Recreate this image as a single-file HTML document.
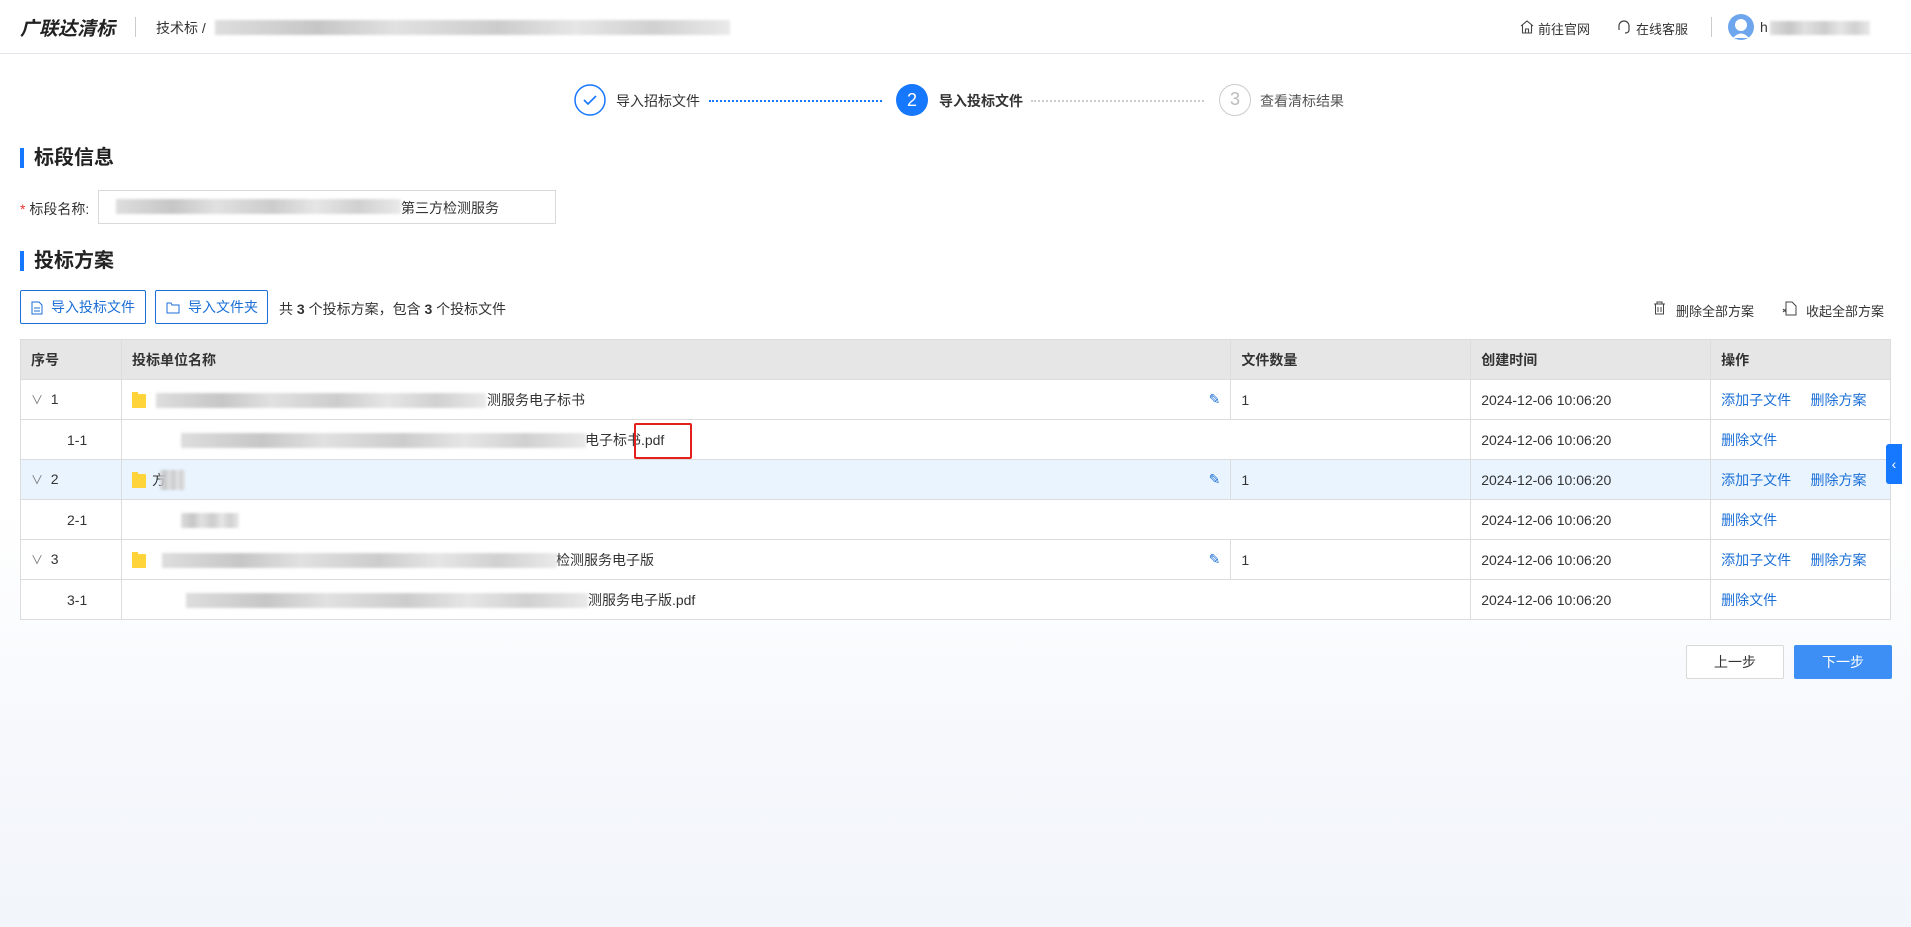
<!DOCTYPE html>
<html><head><meta charset="utf-8"><style>
*{margin:0;padding:0;box-sizing:border-box}
body{width:1911px;height:927px;overflow:hidden;font-family:"Liberation Sans","Noto Sans CJK SC",sans-serif;font-size:14px;color:#333;background:linear-gradient(180deg,#fff 0%,#fff 55%,#f6f8fc 80%,#f2f5fa 100%);position:relative}
.abs{position:absolute}
.hdr{left:0;top:0;width:1911px;height:54px;background:#fff;border-bottom:1px solid #e3e6eb}
.blur{position:absolute;background:linear-gradient(90deg,#d8d8d8,#bdbdbd 20%,#dcdcdc 35%,#c4c4c4 55%,#e2e2e2 70%,#c9c9c9 85%,#e6e6e6);filter:blur(1.2px);opacity:.85}
.sec{font-size:20px;font-weight:bold;color:#222;padding-left:10px;border-left:4px solid #1677ff;line-height:20px}
.btn{position:absolute;border:1px solid #1b6fd6;color:#1b6fd6;background:#fff;height:34px;line-height:32px;font-size:14px;border-radius:2px;padding-left:30px}
table{position:absolute;left:20px;top:339px;width:1871px;border-collapse:collapse;font-size:14px}
td,th{border:1px solid #dcdcdc;height:40px;padding:0 0 0 10px;text-align:left}
th{background:#e6e6e6;font-weight:bold;color:#333}
td{background:#fff}
.link{color:#1b6fd6}
.hl td{background:#e9f4ff}
.fold{display:inline-block;width:14px;height:14px;background:#ffd43b;border-radius:1px;vertical-align:middle;margin-right:6px;position:relative}
.fold:before{content:"";position:absolute;left:0;top:-2px;width:6px;height:3px;background:#ffd43b}
</style></head><body>
<div class="abs hdr"></div>
<div class="abs" style="left:20px;top:14px;font-size:19px;font-weight:bold;font-style:italic;color:#222">广联达清标</div>
<div class="abs" style="left:135px;top:17px;width:1px;height:20px;background:#ccc"></div>
<div class="abs" style="left:156px;top:18px;font-size:14px;color:#333">技术标 / </div>
<div class="blur" style="left:215px;top:20px;width:515px;height:15px"></div>
<svg class="abs" style="left:1519px;top:19px" width="16" height="16" viewBox="0 0 16 16" fill="none" stroke="#444" stroke-width="1.1"><path d="M2 7L8 2l6 5M3.5 6v8h9V6M6.5 14v-4h3v4"/></svg>
<div class="abs" style="left:1538px;top:19px;font-size:13px">前往官网</div>
<svg class="abs" style="left:1616px;top:19px" width="16" height="16" viewBox="0 0 16 16" fill="none" stroke="#444" stroke-width="1.2"><path d="M3 10V7a5 5 0 0 1 10 0v3M3 8v3M13 8v3M13 11q0 3-4 3"/></svg>
<div class="abs" style="left:1636px;top:19px;font-size:13px">在线客服</div>
<div class="abs" style="left:1711px;top:17px;width:1px;height:20px;background:#ccc"></div>
<svg class="abs" style="left:1727px;top:13px" width="28" height="28" viewBox="0 0 28 28"><circle cx="14" cy="14" r="13" fill="#6ea6ee"/><circle cx="14" cy="12" r="6" fill="#fff"/><path d="M6 25q8-9 16 0" fill="#fff"/></svg>
<div class="abs" style="left:1760px;top:19px;font-size:14px">h</div>
<div class="blur" style="left:1770px;top:21px;width:100px;height:14px"></div>

<svg class="abs" style="left:574px;top:84px" width="32" height="32"><circle cx="16" cy="16" r="15" fill="#fff" stroke="#1677ff" stroke-width="1.5"/><path d="M10 16l4 4 8-8" fill="none" stroke="#1677ff" stroke-width="1.6"/></svg>
<div class="abs" style="left:616px;top:91px;font-size:14px">导入招标文件</div>
<div class="abs" style="left:709px;top:100px;width:173px;border-top:2px dotted #1677ff"></div>
<div class="abs" style="left:896px;top:84px;width:32px;height:32px;border-radius:50%;background:#1677ff;color:#fff;font-size:18px;text-align:center;line-height:32px">2</div>
<div class="abs" style="left:939px;top:91px;font-size:14px;font-weight:bold">导入投标文件</div>
<div class="abs" style="left:1031px;top:100px;width:173px;border-top:2px dotted #ccc"></div>
<div class="abs" style="left:1219px;top:84px;width:32px;height:32px;border-radius:50%;border:1.5px solid #ccc;color:#bbb;font-size:18px;text-align:center;line-height:29px">3</div>
<div class="abs" style="left:1260px;top:91px;font-size:14px;color:#555">查看清标结果</div>

<div class="abs sec" style="left:20px;top:148px">标段信息</div>
<div class="abs" style="left:20px;top:199px;font-size:14px"><span style="color:#e33">*</span> 标段名称:</div>
<div class="abs" style="left:98px;top:190px;width:458px;height:34px;border:1px solid #d9d9d9;background:#fff"></div>
<div class="blur" style="left:116px;top:199px;width:285px;height:15px"></div>
<div class="abs" style="left:401px;top:198px;font-size:14px">第三方检测服务</div>

<div class="abs sec" style="left:20px;top:251px">投标方案</div>
<div class="btn" style="left:20px;top:290px;width:126px">导入投标文件</div>
<svg class="abs" style="left:31px;top:301px" width="12" height="14" fill="none" stroke="#1b6fd6"><path d="M1 1h7l3 3v9H1z M3 7h6M3 10h6"/></svg>
<div class="btn" style="left:155px;top:290px;width:113px;padding-left:32px">导入文件夹</div>
<svg class="abs" style="left:166px;top:302px" width="14" height="12" fill="none" stroke="#1b6fd6"><path d="M1 1h4l1 2h7v8H1z"/></svg>
<div class="abs" style="left:279px;top:299px;font-size:14px">共 <b>3</b> 个投标方案，包含 <b>3</b> 个投标文件</div>
<svg class="abs" style="left:1653px;top:301px" width="13" height="14" fill="none" stroke="#444"><path d="M1 3h11M4 3V1h5v2M2.5 3v10h8V3M5 6v5M8 6v5"/></svg>
<div class="abs" style="left:1676px;top:301px;font-size:13px">删除全部方案</div>
<svg class="abs" style="left:1782px;top:301px" width="15" height="15" fill="none" stroke="#444"><path d="M4 1h6l4 4v9H4zM1 8l3 3M1 11l3-3"/></svg>
<div class="abs" style="left:1806px;top:301px;font-size:13px">收起全部方案</div>

<table>
<colgroup><col style="width:101px"><col style="width:1110px"><col style="width:240px"><col style="width:240px"><col style="width:180px"></colgroup>
<tr><th>序号</th><th>投标单位名称</th><th>文件数量</th><th>创建时间</th><th>操作</th></tr>
<tr><td><span style="color:#777;font-size:12px">∨</span>&nbsp; 1</td><td style="position:relative"><span class="fold"></span><span style="display:inline-block;width:335px"></span>测服务电子标书<div class="blur" style="left:34px;top:13px;width:330px;height:15px"></div><span class="link" style="position:absolute;right:10px;top:11px">✎</span></td><td>1</td><td>2024-12-06 10:06:20</td><td class="link">添加子文件 &nbsp;&nbsp;&nbsp; 删除方案</td></tr>
<tr><td style="padding-left:46px">1-1</td><td colspan="2" style="position:relative;padding-left:59px"><span style="display:inline-block;width:404px"></span>电子标书.pdf<div class="blur" style="left:59px;top:13px;width:405px;height:15px"></div><div style="position:absolute;left:512px;top:3px;width:58px;height:36px;border:2px solid #e3201b;border-radius:2px"></div></td><td>2024-12-06 10:06:20</td><td class="link">删除文件</td></tr>
<tr class="hl"><td><span style="color:#777;font-size:12px">∨</span>&nbsp; 2</td><td style="position:relative"><span class="fold"></span>方<div class="blur" style="left:38px;top:10px;width:25px;height:20px"></div><span class="link" style="position:absolute;right:10px;top:11px">✎</span></td><td>1</td><td>2024-12-06 10:06:20</td><td class="link">添加子文件 &nbsp;&nbsp;&nbsp; 删除方案</td></tr>
<tr><td style="padding-left:46px">2-1</td><td colspan="2" style="position:relative;padding-left:59px"><div class="blur" style="left:59px;top:13px;width:58px;height:15px"></div></td><td>2024-12-06 10:06:20</td><td class="link">删除文件</td></tr>
<tr><td><span style="color:#777;font-size:12px">∨</span>&nbsp; 3</td><td style="position:relative"><span class="fold"></span><span style="display:inline-block;width:404px"></span>检测服务电子版<div class="blur" style="left:40px;top:13px;width:395px;height:15px"></div><span class="link" style="position:absolute;right:10px;top:11px">✎</span></td><td>1</td><td>2024-12-06 10:06:20</td><td class="link">添加子文件 &nbsp;&nbsp;&nbsp; 删除方案</td></tr>
<tr><td style="padding-left:46px">3-1</td><td colspan="2" style="position:relative;padding-left:59px"><span style="display:inline-block;width:407px"></span>测服务电子版.pdf<div class="blur" style="left:64px;top:13px;width:402px;height:15px"></div></td><td>2024-12-06 10:06:20</td><td class="link">删除文件</td></tr>
</table>

<div class="abs" style="left:1686px;top:645px;width:98px;height:34px;border:1px solid #d9d9d9;background:#fff;text-align:center;line-height:32px;font-size:14px;border-radius:2px">上一步</div>
<div class="abs" style="left:1794px;top:645px;width:98px;height:34px;background:#3d8ff5;color:#fff;text-align:center;line-height:34px;font-size:14px;border-radius:2px">下一步</div>
<div class="abs" style="left:1886px;top:444px;width:16px;height:40px;background:#1677ff;border-radius:3px 0 0 3px;color:#fff;font-size:14px;line-height:40px;text-align:center">‹</div>
</body></html>
